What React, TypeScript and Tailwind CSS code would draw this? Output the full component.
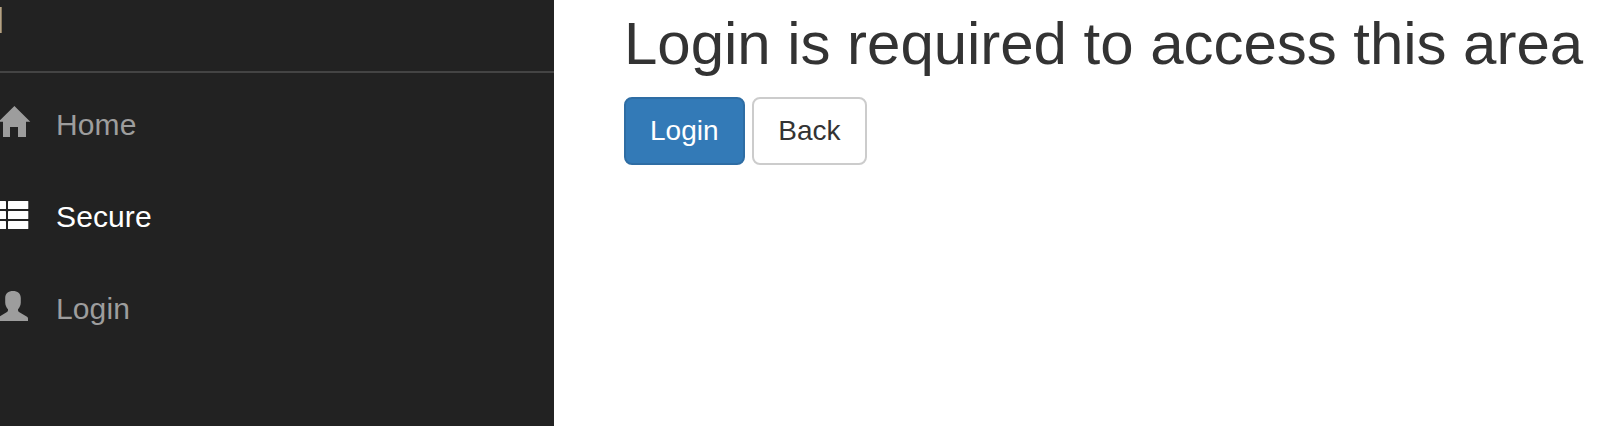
import type { ReactNode } from "react";

function HomeIcon() {
  return (
    <svg width="32" height="34" viewBox="0 0 32 34" fill="currentColor" className="block">
      <path d="M14.4 2 L30.3 17.8 H26 V33 H18 V23 H10 V33 H3 V17.8 H-1.5 Z" />
    </svg>
  );
}

function ListIcon() {
  return (
    <svg width="32" height="34" viewBox="0 0 32 34" fill="currentColor" className="block">
      <rect x="-8" y="5" width="14" height="8" rx="0.6" />
      <rect x="-8" y="15" width="14" height="8" rx="0.6" />
      <rect x="-8" y="25" width="14" height="8" rx="0.6" />
      <rect x="8" y="5" width="20.3" height="8" rx="0.6" />
      <rect x="8" y="15" width="20.3" height="8" rx="0.6" />
      <rect x="8" y="25" width="20.3" height="8" rx="0.6" />
    </svg>
  );
}

function UserIcon() {
  return (
    <svg width="32" height="34" viewBox="0 0 32 34" fill="currentColor" className="block">
      <path d="M13 3C17.5 3 20.8 5.5 20.8 10V14.5C20.8 17.5 19.5 19.5 18 21.3V22.3C18 23 18.4 23.5 19 23.9L27 28.8C27.7 29.2 28 29.7 28 30.4V33H-2V30.4C-2 29.7 -1.7 29.2 -1 28.8L7 23.9C7.6 23.5 8 23 8 22.3V21.3C6.5 19.5 5.2 17.5 5.2 14.5V10C5.2 5.5 8.5 3 13 3Z" />
    </svg>
  );
}

function NavItem({ icon, label, active = false }: { icon: ReactNode; label: string; active?: boolean }) {
  return (
    <li>
      <a href="#" className={`flex h-[92px] items-start ${active ? "text-white" : "text-[#9d9d9d]"}`}>
        <span className="w-14 shrink-0 pt-4">{icon}</span>
        <span className="pt-[17px] text-[30px] leading-10 tracking-[0.12px]">{label}</span>
      </a>
    </li>
  );
}

export default function App() {
  return (
    <div className="flex h-[426px] w-full overflow-hidden bg-white font-['Liberation_Sans',Arial,sans-serif]">
      <nav className="w-[554px] shrink-0 bg-[#222]">
        <div className="h-[73px] border-b-2 border-[#444] pt-[7px]">
          <div className="h-[26px] w-[2px] border-r border-[#89785c] bg-[#b3a287]" />
        </div>
        <ul className="pt-[15px]">
          <NavItem icon={<HomeIcon />} label="Home" />
          <NavItem icon={<ListIcon />} label="Secure" active />
          <NavItem icon={<UserIcon />} label="Login" />
        </ul>
      </nav>
      <main className="grow pl-[70px] pt-[11px] text-[#333]">
        <h2 className="whitespace-nowrap text-[60px] leading-[66px] tracking-[-0.04px]">Login is required to access this area</h2>
        <div className="mt-5 flex gap-[7.8px] text-[28px] leading-10">
          <button className="h-[68px] rounded-lg border-2 border-[#2e6da4] bg-[#337ab7] px-6 text-white">Login</button>
          <button className="h-[68px] rounded-lg border-2 border-[#ccc] bg-white px-6">Back</button>
        </div>
      </main>
    </div>
  );
}
